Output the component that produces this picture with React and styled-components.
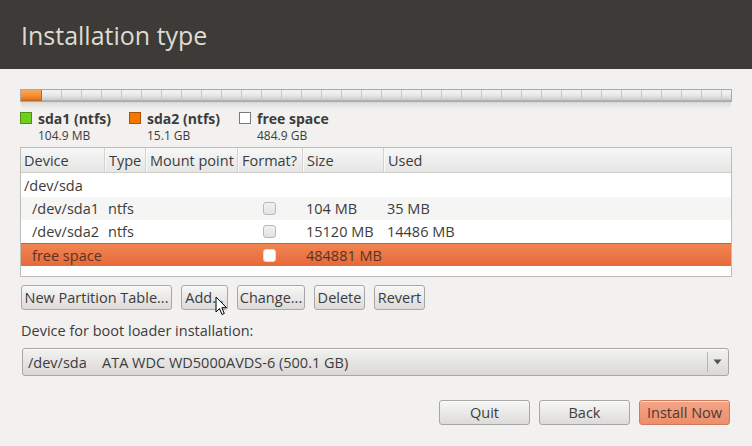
import React from "react";
import styled, { createGlobalStyle } from "styled-components";

const Global = createGlobalStyle`
  html, body { margin: 0; padding: 0; background: #f2f1f0; }
  body { font-family: "Open Sans", "Noto Sans", sans-serif; color: #3c3c3c; }
  * { box-sizing: border-box; }
`;

const Page = styled.div`
  width: 752px;
  height: 446px;
  display: flex;
  flex-direction: column;
  background: #f2f1f0;
  position: relative;
  overflow: hidden;
`;

const Header = styled.header`
  height: 69px;
  background: #3c3b37;
  display: flex;
  align-items: center;
  padding-left: 21px;
  flex-shrink: 0;
`;

const Title = styled.h1`
  margin: 0;
  font-size: 25px;
  font-weight: 400;
  color: #dfdbd2;
  padding-top: 1px;
`;

const Body = styled.div`
  display: flex;
  flex-direction: column;
  padding: 20px 20px 0 20px;
`;

const Bar = styled.div`
  display: flex;
  height: 13px;
  border: 1px solid #a9a9a9;
  background:
    repeating-linear-gradient(90deg, transparent 0 19px, #c6c6c6 19px 20px),
    linear-gradient(#f3f3f3 0%, #e9e9e9 45%, #d0d0d0 85%, #a7a7a7 100%);
  background-position: 1px 0, 0 0;
`;

const Segment = styled.div`
  width: ${(p) => p.$w}px;
  height: 100%;
  background: linear-gradient(#f9a65c 0%, #f39235 50%, #d9731a 90%, #b65d15 100%);
  border-right: 1px solid #c46514;
`;

const BarShadow = styled.div`
  height: 7px;
  background: linear-gradient(rgba(0,0,0,0.10), rgba(0,0,0,0));
  margin: 0 1px;
`;

const Legend = styled.div`
  display: flex;
`;

const LegendItem = styled.div`
  display: flex;
  width: ${(p) => p.$w}px;
  gap: 6px;
`;

const Swatch = styled.div`
  width: 12px;
  height: 12px;
  margin-top: 3px;
  background: ${(p) => p.$c};
  border: 1px solid ${(p) => p.$b};
`;

const LegendText = styled.div`
  display: flex;
  flex-direction: column;
`;

const LegendName = styled.div`
  font-weight: 700;
  font-size: 14px;
  line-height: 19px;
  color: #3c3c3c;
`;

const LegendSize = styled.div`
  font-size: 12px;
  line-height: 16px;
  color: #3c3c3c;
`;

const Table = styled.div`
  margin-top: 3px;
  border: 1px solid #bdbcba;
  background: #fff;
  height: 130px;
  display: flex;
  flex-direction: column;
`;

const COLS = "83px 41px 92px 65px 81px 1fr";

const HeadRow = styled.div`
  display: grid;
  grid-template-columns: ${COLS};
  height: 25px;
  background: linear-gradient(#f7f7f7, #e6e6e5);
  border-bottom: 1px solid #cfcecc;
`;

const HeadCell = styled.div`
  font-size: 14.5px;
  line-height: 25px;
  padding-left: ${(p) => (p.$first ? 3 : 4)}px;
  border-left: ${(p) => (p.$first ? "none" : "1px solid #d3d2d0")};
  box-shadow: ${(p) => (p.$first ? "none" : "inset 1px 0 0 #fafafa")};
  color: #3c3c3c;
  white-space: nowrap;
  overflow: hidden;
`;

const Row = styled.div`
  display: grid;
  grid-template-columns: ${COLS};
  height: ${(p) => p.$h || 23}px;
  align-items: center;
  background: ${(p) =>
    p.$sel
      ? "linear-gradient(#f18552, #e6693a)"
      : p.$alt
      ? "#f5f5f4"
      : "#ffffff"};
  border-top: ${(p) => (p.$sel ? "1px solid #d35f2f" : "none")};
`;

const Cell = styled.div`
  font-size: 14.5px;
  padding-left: ${(p) => p.$pad ?? 4}px;
  color: ${(p) => (p.$sel ? "#5a3323" : "#3c3c3c")};
  white-space: nowrap;
  display: flex;
  justify-content: ${(p) => (p.$center ? "center" : "flex-start")};
`;

const Check = styled.div`
  width: 13px;
  height: 13px;
  border-radius: 3px;
  border: 1px solid ${(p) => (p.$sel ? "#e4dcd6" : "#b9b8b6")};
  background: ${(p) => (p.$sel ? "#ffffff" : "linear-gradient(#f2f2f2, #e2e2e2)")};
  margin-left: -1px;
`;

const ButtonRow = styled.div`
  display: flex;
  gap: 9px;
  margin-top: 8px;
  padding-left: 1px;
`;

const Button = styled.button`
  height: 25px;
  width: ${(p) => p.$w}px;
  padding: 0;
  font-family: inherit;
  font-size: 14.5px;
  color: ${(p) => (p.$primary ? "#4a3a33" : "#3c3c3c")};
  border: 1px solid ${(p) => (p.$primary ? "#d17a5b" : "#a8a7a5")};
  border-radius: 3px;
  background: ${(p) =>
    p.$primary
      ? "linear-gradient(#f4a587, #ec8e6b)"
      : "linear-gradient(#f7f7f6, #dcdbd9)"};
  box-shadow: inset 0 1px 0 rgba(255,255,255,0.6);
  display: flex;
  align-items: center;
  justify-content: center;
  white-space: nowrap;
`;

const BootLabel = styled.div`
  margin-top: 12px;
  font-size: 14.5px;
  line-height: 18px;
  padding-left: 1px;
  color: #3c3c3c;
`;

const Combo = styled.div`
  margin: 8px 3px 0 2px;
  height: 28px;
  border: 1px solid #a8a7a5;
  border-radius: 3px;
  background: linear-gradient(#f2f2f1, #d9d8d6);
  display: flex;
  align-items: center;
  box-shadow: inset 0 1px 0 rgba(255,255,255,0.6);
`;

const ComboText = styled.div`
  flex: 1;
  font-size: 14.5px;
  color: #3c3c3c;
  padding-left: 5px;
  display: flex;
`;

const ComboDevice = styled.span`
  width: 74px;
`;

const ComboArrow = styled.div`
  width: 20px;
  height: 20px;
  border-left: 1px solid #b6b5b3;
  display: flex;
  align-items: center;
  justify-content: center;
  margin-right: 1px;
`;

const Footer = styled.div`
  display: flex;
  justify-content: flex-end;
  gap: 9px;
  margin-top: 24px;
  padding-right: 2px;
`;

const Cursor = styled.svg`
  position: absolute;
  left: 215px;
  top: 296px;
`;

const legend = [
  { name: "sda1 (ntfs)", size: "104.9 MB", c: "#6fcf1a", b: "#4f8f14", w: 109 },
  { name: "sda2 (ntfs)", size: "15.1 GB", c: "#f57900", b: "#a65305", w: 110 },
  { name: "free space", size: "484.9 GB", c: "#ffffff", b: "#7a7a7a", w: 150 },
];

export default function App() {
  return (
    <Page>
      <Global />
      <Header>
        <Title>Installation type</Title>
      </Header>
      <Body>
        <Bar>
          <Segment $w={21} />
        </Bar>
        <BarShadow />
        <Legend>
          {legend.map((l) => (
            <LegendItem key={l.name} $w={l.w}>
              <Swatch $c={l.c} $b={l.b} />
              <LegendText>
                <LegendName>{l.name}</LegendName>
                <LegendSize>{l.size}</LegendSize>
              </LegendText>
            </LegendItem>
          ))}
        </Legend>
        <Table>
          <HeadRow>
            <HeadCell $first>Device</HeadCell>
            <HeadCell>Type</HeadCell>
            <HeadCell>Mount point</HeadCell>
            <HeadCell>Format?</HeadCell>
            <HeadCell>Size</HeadCell>
            <HeadCell>Used</HeadCell>
          </HeadRow>
          <Row $h={24}>
            <Cell $pad={3}>/dev/sda</Cell>
          </Row>
          <Row $alt>
            <Cell $pad={11}>/dev/sda1</Cell>
            <Cell>ntfs</Cell>
            <Cell />
            <Cell $center $pad={0}><Check /></Cell>
            <Cell>104 MB</Cell>
            <Cell>35 MB</Cell>
          </Row>
          <Row>
            <Cell $pad={11}>/dev/sda2</Cell>
            <Cell>ntfs</Cell>
            <Cell />
            <Cell $center $pad={0}><Check /></Cell>
            <Cell>15120 MB</Cell>
            <Cell>14486 MB</Cell>
          </Row>
          <Row $sel>
            <Cell $sel $pad={11}>free space</Cell>
            <Cell />
            <Cell />
            <Cell $center $pad={0}><Check $sel /></Cell>
            <Cell $sel>484881 MB</Cell>
            <Cell />
          </Row>
        </Table>
        <ButtonRow>
          <Button $w={151}>New Partition Table...</Button>
          <Button $w={47}>Add...</Button>
          <Button $w={68}>Change...</Button>
          <Button $w={51}>Delete</Button>
          <Button $w={51}>Revert</Button>
        </ButtonRow>
        <BootLabel>Device for boot loader installation:</BootLabel>
        <Combo>
          <ComboText>
            <ComboDevice>/dev/sda</ComboDevice>
            <span>ATA WDC WD5000AVDS-6 (500.1 GB)</span>
          </ComboText>
          <ComboArrow>
            <svg width="9" height="6" viewBox="0 0 9 6">
              <path d="M0.5 0.5 L8.5 0.5 L4.5 5.5 Z" fill="#555" />
            </svg>
          </ComboArrow>
        </Combo>
        <Footer>
          <Button $w={91}>Quit</Button>
          <Button $w={91}>Back</Button>
          <Button $w={91} $primary>Install Now</Button>
        </Footer>
      </Body>
      <Cursor width="13" height="20" viewBox="0 0 13 20">
        <path
          d="M1 1 L1 16 L4.5 12.5 L7 18.5 L9.3 17.5 L6.8 11.7 L11.5 11.7 Z"
          fill="#fff"
          stroke="#000"
          strokeWidth="1"
          strokeLinejoin="miter"
        />
      </Cursor>
    </Page>
  );
}
